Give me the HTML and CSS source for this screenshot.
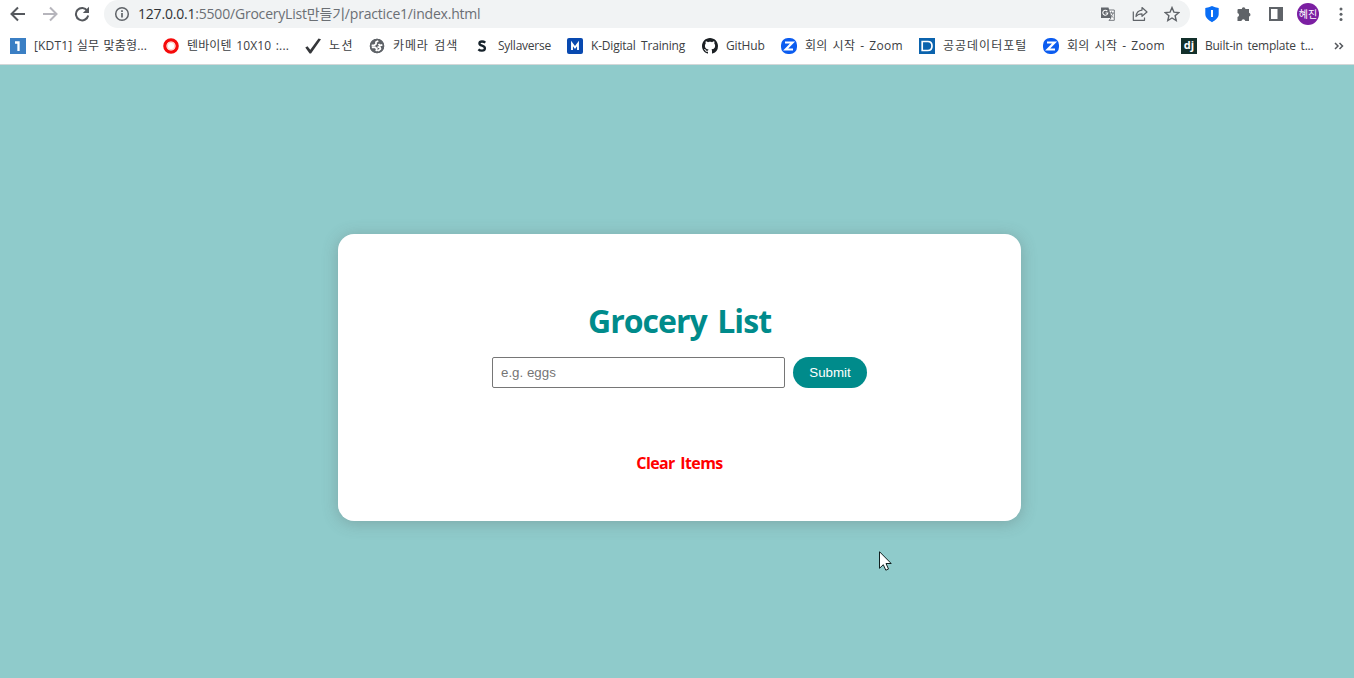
FILE: index.html
```html
<!DOCTYPE html>
<html lang="ko">
<head>
<meta charset="utf-8">
<title>Grocery List</title>
<link rel="stylesheet" href="styles.css">
</head>
<body>
<header class="browser">
  <div class="toolbar">
    <nav class="nav">
      <svg width="16" height="16" viewBox="0 0 16 16" class="line"><path d="M15 8H2M8 1.500 1.500 8 8 14.500"/></svg>
      <svg width="16" height="16" viewBox="0 0 16 16" class="line pale"><path d="M1 8h13M8 1.500 14.500 8 8 14.500"/></svg>
      <svg width="16" height="16" viewBox="0 0 16 16"><path d="M13.300 4.700A6.200 6.200 0 1 0 14.200 9.500" fill="none" stroke="#55585d" stroke-width="2"/><path d="M15 .8V7H8.800z" fill="#55585d"/></svg>
    </nav>
    <div class="address">
      <svg class="info" width="16" height="16" viewBox="0 0 16 16"><circle cx="8" cy="8" r="6.300" fill="none" stroke="#5f6368" stroke-width="1.500"/><path d="M8 7v4.500M8 4.300v1.700" stroke="#5f6368" stroke-width="1.700"/></svg>
      <span class="url"><span class="host">127.0.0.1</span>:5500/GroceryList만들기/practice1/index.html</span>
      <div class="page-actions">
        <svg width="16" height="16" viewBox="0 0 16 16"><path d="M6 4h8.300v10.300H9" fill="#fff" stroke="#73777c"/><path d="M1 1.500h7.500l3 10.500H1z" fill="#63676c"/><path d="M7.300 5.200A2.500 2.500 0 1 0 7.800 7H5.500" fill="none" stroke="#fff" stroke-width="1.100"/><path d="M9 7h5M11.500 5.500V7M13 7c-.5 2-1.500 3-2.500 4M10 8.500l3.500 3.300M9 14.500l2-2.500" fill="none" stroke="#73777c"/></svg>
        <svg width="16" height="16" viewBox="0 0 16 16" fill="none" stroke="#5f6368" stroke-width="1.200" stroke-linejoin="round"><path d="M1.300 5.500v8.800h11.200V11.500"/><path d="M10 1.500 15 6l-5 4.300V7.800c-2.800 0-4.600.7-6 2.700.3-3.700 2.500-6 6-6.400z"/></svg>
        <svg width="16" height="16" viewBox="0 0 16 16"><path d="m8 1.600 1.900 4.500 4.900.4-3.700 3.200 1.100 4.800L8 12l-4.200 2.500 1.100-4.800L1.200 6.500l4.900-.4z" fill="none" stroke="#5f6368" stroke-width="1.400"/></svg>
      </div>
    </div>
    <div class="extensions">
      <svg width="16" height="18" viewBox="0 0 16 18"><path d="M8 1q3 1.700 6.700 2v6c0 3.500-2.700 6-6.700 8.200C4 15 1.300 12.500 1.300 9V3Q5 2.700 8 1z" fill="#0a6ef5"/><path d="M8 5v7" stroke="#fff" stroke-width="2"/></svg>
      <svg width="16" height="16" viewBox="0 0 16 16"><path d="M2.500 3h3.300a1.800 1.800 0 0 1 3.600 0H13v3.800a1.900 1.900 0 0 1 0 3.700v4.400H9.300a2 2 0 0 0-3.900 0H1.500V11a2 2 0 0 0 0-3.900V4a1 1 0 0 1 1-1z" fill="#5f6368"/></svg>
      <svg width="16" height="16" viewBox="0 0 16 16"><path d="M1 1h14v14H1zM3 3v10h6.500V3z" fill="#5f6368" fill-rule="evenodd"/></svg>
      <span class="avatar">혜진</span>
      <svg width="4" height="16" viewBox="0 0 4 16" fill="#5f6368"><circle cx="2" cy="3" r="1.500"/><circle cx="2" cy="8.300" r="1.500"/><circle cx="2" cy="13.600" r="1.500"/></svg>
    </div>
  </div>
  <div class="bookmarks">
    <a class="bm"><svg viewBox="0 0 16 16"><path fill="#3b7fc4" d="M0 0h16v16H0z"/><path d="M5 4.500h3.500V13" fill="none" stroke="#fff" stroke-width="2.300"/></svg><span class="t-kdt">[KDT1] 실무 맞춤형...</span></a>
    <a class="bm"><svg viewBox="0 0 16 16"><circle cx="8" cy="8" r="6.200" fill="#fff" stroke="#f50a0a" stroke-width="3.200"/><circle cx="8" cy="8" r="3.800" fill="none" stroke="#ffc9bd" stroke-width="1"/></svg><span class="t-ten">텐바이텐 10X10 :...</span></a>
    <a class="bm"><svg viewBox="0 0 16 16"><path d="M.3 9.500 2.500 8.300l2.800 3.400L13.500.6l2.500.7L6 15.500H4.600z" fill="#35373a"/></svg><span class="t-notion">노션</span></a>
    <a class="bm"><svg viewBox="0 0 16 16"><circle cx="8" cy="8" r="7.200" fill="#5f6368"/><path d="M9.300 2.600 7 4.200v1.600L5.300 7.300H2.400M2.600 9.300h3.600l1.600 1.400-.6 2.600M9.500 6l1.300 1.500 2.800-.6M8.500 8.800l2.500.6.5 1.500-2.800 2.300" fill="none" stroke="#fff" stroke-width="1.800"/><circle cx="8" cy="8" r="6.500" fill="none" stroke="#5f6368" stroke-width="1.500"/></svg><span class="t-camera">카메라 검색</span></a>
    <a class="bm"><svg viewBox="0 0 16 16"><path d="M11.300 4.600C10.300 3.800 9.200 3.500 8 3.500c-1.600 0-2.600.6-2.600 1.900 0 2.800 5.500 1.800 5.500 4.800 0 1.500-1.200 2.400-3 2.400-1.500 0-2.700-.4-3.500-1.200" fill="none" stroke="#16222b" stroke-width="2.300"/></svg><span class="t-sylla">Syllaverse</span></a>
    <a class="bm"><svg viewBox="0 0 16 16"><rect width="16" height="16" rx="2" fill="#0849b0"/><path d="M5 12V5.500l3 4 3-4V12" fill="none" stroke="#fff" stroke-width="1.900"/></svg><span class="t-kdigital">K-Digital Training</span></a>
    <a class="bm"><svg viewBox="0 0 16 16"><path fill="#1b1f23" d="M8 0C3.580 0 0 3.580 0 8c0 3.540 2.290 6.530 5.470 7.590.4.070.55-.17.55-.38 0-.19-.01-.82-.01-1.490-2.010.37-2.530-.49-2.690-.94-.09-.23-.48-.94-.82-1.130-.28-.15-.68-.52-.01-.53.63-.01 1.080.58 1.230.82.72 1.210 1.870.87 2.330.66.070-.52.280-.87.510-1.070-1.780-.2-3.640-.89-3.640-3.950 0-.87.310-1.590.82-2.150-.08-.2-.36-1.020.08-2.120 0 0 .67-.21 2.200.82.64-.18 1.320-.27 2-.27s1.360.09 2 .27c1.530-1.040 2.200-.82 2.200-.82.440 1.100.16 1.920.08 2.120.51.560.82 1.270.82 2.150 0 3.070-1.870 3.750-3.650 3.950.29.25.54.73.54 1.480 0 1.070-.01 1.930-.01 2.200 0 .21.15.46.55.38A8.010 8.010 0 0 0 16 8c0-4.420-3.580-8-8-8z"/></svg><span class="t-github">GitHub</span></a>
    <a class="bm"><svg viewBox="0 0 16 16"><rect width="16" height="16" rx="7" fill="#0b5cf0"/><path d="M4 4.500h7.500L4.700 11.500H12" fill="none" stroke="#fff" stroke-width="2.200"/></svg><span class="t-zoom">회의 시작 - Zoom</span></a>
    <a class="bm"><svg viewBox="0 0 16 16"><path fill="#0b63ad" d="M0 0h16v16H0z"/><path d="M3.200 3.500h5.600c2.800 0 4.200 1.700 4.200 4.500s-1.400 4.500-4.200 4.500H3.200zM3.200 3v10" fill="none" stroke="#fff" stroke-width="1.700"/></svg><span class="t-portal">공공데이터포털</span></a>
    <a class="bm"><svg viewBox="0 0 16 16"><rect width="16" height="16" rx="7" fill="#0b5cf0"/><path d="M4 4.500h7.500L4.700 11.500H12" fill="none" stroke="#fff" stroke-width="2.200"/></svg><span class="t-zoom">회의 시작 - Zoom</span></a>
    <a class="bm"><span class="dj">dj</span><span class="t-built">Built-in template t...</span></a>
    <svg class="more" viewBox="0 0 10 8"><path d="m1 1 3 3-3 3M5.500 1l3 3-3 3" fill="none" stroke="#55585d" stroke-width="1.500"/></svg>
  </div>
</header>
<main class="page">
  <section class="card">
    <form class="grocery-form">
      <h1>Grocery List</h1>
      <div class="form-control">
        <input type="text" placeholder="e.g. eggs">
        <button type="button" class="submit">Submit</button>
      </div>
    </form>
    <button type="button" class="clear"><span>Clear Items</span></button>
  </section>
  <svg class="cursor" width="13" height="21" viewBox="0 0 13 21"><path d="M.5.700v16.600l3.800-3.600 2.500 5.500 2.700-1.200L7 12.500h5.200z" fill="#fff" stroke="#102020"/></svg>
</main>
</body>
</html>
```
FILE: styles.css
```css
* { box-sizing: border-box; }
body {
  margin: 0;
  height: 678px;
  overflow: hidden;
  display: flex;
  flex-direction: column;
  font-family: "Open Sans", "Noto Sans CJK KR", sans-serif;
}
svg { display: block; flex: none; }
.browser { height: 65px; background: #fff; border-bottom: 1px solid #d3d7d8; }
.toolbar { display: flex; height: 28px; }
.nav { flex: none; width: 104px; padding-left: 10px; display: flex; align-items: center; gap: 16px; }
.line { fill: none; stroke: #55585d; stroke-width: 2; }
.pale { stroke: #b6b5bc; }
.address {
  flex: none;
  width: 1086px;
  height: 28px;
  padding: 0 10px;
  display: flex;
  align-items: center;
  background: #f1f3f4;
  border-radius: 14px;
}
.url { margin-left: 8px; font-size: 14px; line-height: 20px; color: #6b6f74; white-space: nowrap; letter-spacing: -.2px; }
.host { color: #303236; }
.page-actions { margin-left: auto; display: flex; gap: 16px; }
.extensions { display: flex; align-items: center; padding-left: 14px; }
.extensions svg { margin-right: 16px; }
.extensions svg:last-child { margin-right: 0; }
.avatar {
  flex: none;
  width: 22px;
  height: 22px;
  margin: 0 20px 0 -3px;
  border-radius: 50%;
  background: #7b1fa2;
  color: #fff;
  font-size: 10px;
  line-height: 22px;
  text-align: center;
  white-space: nowrap;
}
.bookmarks {
  height: 36px;
  padding-left: 10px;
  display: grid;
  grid-template-columns: 153px 142px 64px 105px 93px 135px 79px 138px 124px 138px 153px 10px;
  align-items: center;
}
.bm { display: flex; align-items: center; gap: 8px; font-size: 12px; line-height: 18px; color: #3c4043; white-space: nowrap; }
.bm svg { width: 16px; height: 16px; }
.t-kdt { letter-spacing: .15px; word-spacing: 1.2px; }
.t-ten { letter-spacing: .1px; word-spacing: 1.500px; }
.t-notion { letter-spacing: 1.500px; }
.t-camera { letter-spacing: .85px; word-spacing: 1.700px; }
.t-sylla { letter-spacing: -.25px; }
.t-kdigital { letter-spacing: -.2px; word-spacing: 2.500px; }
.t-github { letter-spacing: -.15px; }
.t-zoom { letter-spacing: .3px; word-spacing: 1.500px; }
.t-portal { letter-spacing: 1px; }
.t-built { letter-spacing: -.25px; word-spacing: 2px; }
.more { width: 10px; height: 8px; }
.dj { width: 16px; height: 16px; background: #12302b; color: #fff; font-weight: 700; font-size: 11px; line-height: 14px; text-align: center; }
.page { flex: 1; padding-top: 169px; background: #8fcbcb; position: relative; }
.card {
  width: 683px;
  height: 287px;
  margin-left: 338px;
  padding-top: 63px;
  background: #fff;
  border-radius: 16px;
  box-shadow: 0 2px 16px rgba(80, 80, 80, .3);
  text-align: center;
}
h1 { margin: 0; height: 60px; font-size: 32px; line-height: 48px; font-weight: 700; letter-spacing: -.95px; word-spacing: 3px; color: #008b8b; }
.form-control { display: flex; justify-content: center; gap: 8px; height: 31px; }
input { width: 293px; height: 31px; padding: 0 8px; border: 1px solid #767676; border-radius: 2px; font: 13.333px "Liberation Sans", sans-serif; }
input::placeholder { color: #757575; }
.submit { width: 74px; height: 31px; padding: 0; border: 0; border-radius: 16px; background: #008b8b; color: #fff; font: 13.333px "Liberation Sans", sans-serif; }
.clear { display: block; margin: 63px auto 0; padding: 0; border: 0; background: none; color: #f00; font: 700 16px/24px "Open Sans", sans-serif; letter-spacing: -.6px; word-spacing: 2px; }
.cursor { position: absolute; left: 879px; top: 486px; }
```
